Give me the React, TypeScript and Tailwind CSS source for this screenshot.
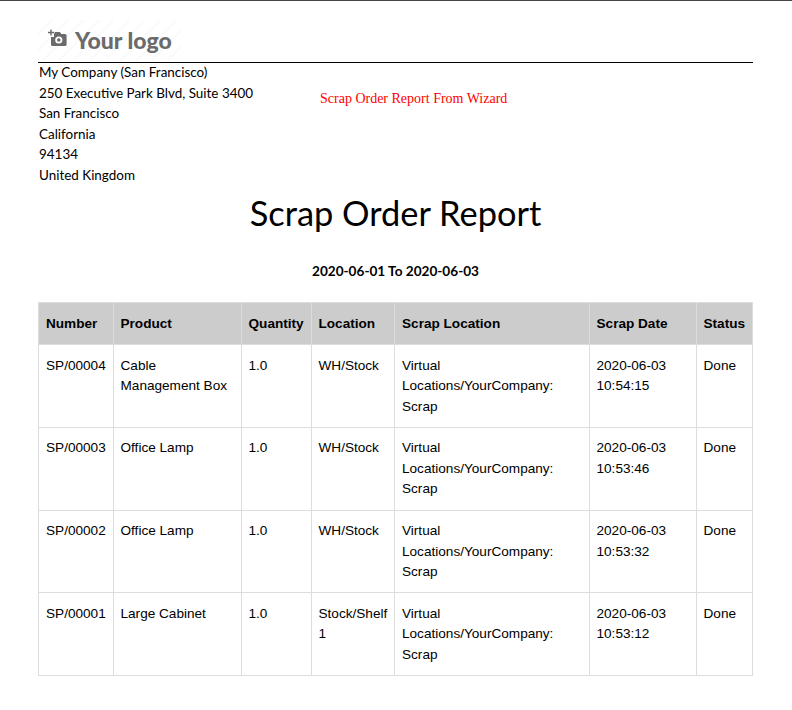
const rows = [
  { no: "SP/00004", product: "Cable Management Box", qty: "1.0", loc: "WH/Stock", time: "10:54:15" },
  { no: "SP/00003", product: "Office Lamp", qty: "1.0", loc: "WH/Stock", time: "10:53:46" },
  { no: "SP/00002", product: "Office Lamp", qty: "1.0", loc: "WH/Stock", time: "10:53:32" },
  { no: "SP/00001", product: "Large Cabinet", qty: "1.0", loc: "Stock/Shelf 1", time: "10:53:12" },
];

const headers = ["Number", "Product", "Quantity", "Location", "Scrap Location", "Scrap Date", "Status"];

const cell = "border border-[#dddddd] pl-[6.5px] first:pl-[7px] nth-[5]:pl-[7px] pr-[6px]";

const Logo = () => (
  <div className="relative w-[144px] h-[40px] bg-[repeating-linear-gradient(135deg,#ffffff_0px,#ffffff_9px,#fafafa_9px,#fafafa_11px)]">
    <svg className="absolute left-[10px] top-[9px]" width="20" height="19" viewBox="0 0 20 19">
      <path d="M3 0.5v6M0 3.5h6" stroke="#6b6b6b" strokeWidth="1.4" />
      <path
        fillRule="evenodd"
        fill="#6b6b6b"
        d="M7 3h5l1.2 2H17a1.6 1.6 0 0 1 1.6 1.6v8.8A1.6 1.6 0 0 1 17 17H4.6A1.6 1.6 0 0 1 3 15.4V8h3V5zM10.8 7.4a3.6 3.6 0 1 0 0 7.2 3.6 3.6 0 0 0 0-7.2zM10.8 9.2a1.8 1.8 0 1 1 0 3.6 1.8 1.8 0 0 1 0-3.6z"
      />
    </svg>
    <span className="absolute left-[37px] top-[5px] font-['Lato',sans-serif] text-[23px] leading-[30px] font-black text-[#6b6b6b]">
      Your logo
    </span>
  </div>
);

export default function App() {
  return (
    <div className="w-[792px] h-[710px] bg-white border-t border-[#444444] overflow-hidden font-['Lato',sans-serif] text-black">
      <div className="ml-[38px] w-[715px]">
        <div className="pt-[19px] border-b border-black h-[62px]">
          <Logo />
        </div>

        <div className="flex -mt-px">
          <div className="w-[282px] pl-px text-[13.44px] leading-[20.5px]">
            <div>My Company (San Francisco)</div>
            <div>250 Executive Park Blvd, Suite 3400</div>
            <div>San Francisco</div>
            <div>California</div>
            <div>94134</div>
            <div>United Kingdom</div>
          </div>
          <div className="pt-[27px] font-['Liberation_Serif',serif] text-[14px] leading-[20px] text-[#ff0000]">
            Scrap Order Report From Wizard
          </div>
        </div>

        <h1 className="mt-[7px] text-center text-[34.4px] leading-[42px] font-normal">Scrap Order Report</h1>

        <div className="mt-[27px] text-center text-[13.6px] leading-[20px] font-bold">2020-06-01 To 2020-06-03</div>

        <table className="mt-[21px] w-[714px] table-fixed border-collapse font-['Liberation_Sans',sans-serif] text-[13.6px] leading-[20.5px]">
          <colgroup>
            <col className="w-[75px]" />
            <col className="w-[128px]" />
            <col className="w-[70px]" />
            <col className="w-[83px]" />
            <col className="w-[195px]" />
            <col className="w-[107px]" />
            <col className="w-[56px]" />
          </colgroup>
          <thead>
            <tr className="bg-[#cccccc] h-[42px]">
              {headers.map((h) => (
                <th key={h} className={`${cell} pt-[2px] text-left font-bold align-middle`}>
                  {h}
                </th>
              ))}
            </tr>
          </thead>
          <tbody>
            {rows.map((r) => (
              <tr key={r.no} className="h-[82.75px] align-top">
                <td className={`${cell} pt-[10.5px]`}>{r.no}</td>
                <td className={`${cell} pt-[10.5px]`}>{r.product}</td>
                <td className={`${cell} pt-[10.5px]`}>{r.qty}</td>
                <td className={`${cell} pt-[10.5px]`}>{r.loc}</td>
                <td className={`${cell} pt-[10.5px]`}>Virtual Locations/YourCompany: Scrap</td>
                <td className={`${cell} pt-[10.5px]`}>
                  <div>2020-06-03</div>
                  <div>{r.time}</div>
                </td>
                <td className={`${cell} pt-[10.5px]`}>Done</td>
              </tr>
            ))}
          </tbody>
        </table>
      </div>
    </div>
  );
}
